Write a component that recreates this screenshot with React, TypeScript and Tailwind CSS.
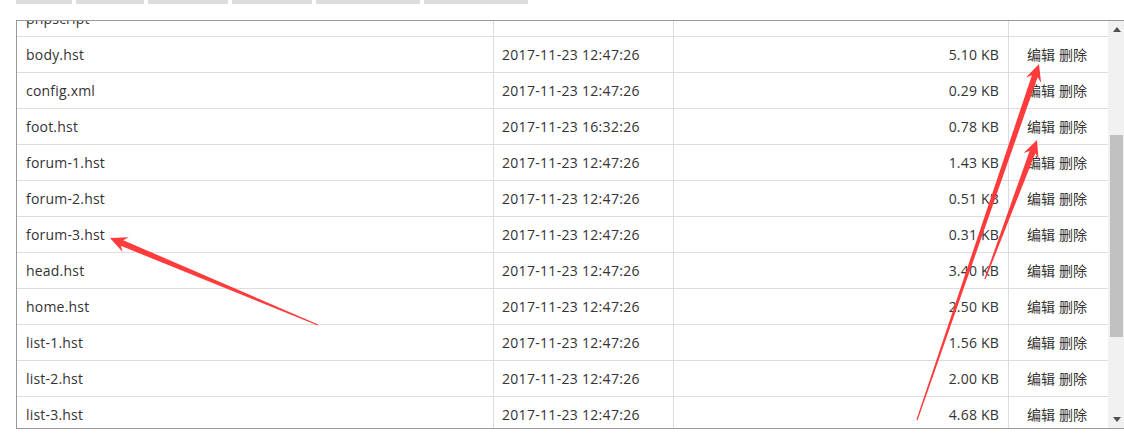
import React from 'react';

const rows = [
  { name: 'phpscript', time: '', size: '', actions: false },
  { name: 'body.hst', time: '2017-11-23 12:47:26', size: '5.10 KB', actions: true },
  { name: 'config.xml', time: '2017-11-23 12:47:26', size: '0.29 KB', actions: true },
  { name: 'foot.hst', time: '2017-11-23 16:32:26', size: '0.78 KB', actions: true },
  { name: 'forum-1.hst', time: '2017-11-23 12:47:26', size: '1.43 KB', actions: true },
  { name: 'forum-2.hst', time: '2017-11-23 12:47:26', size: '0.51 KB', actions: true },
  { name: 'forum-3.hst', time: '2017-11-23 12:47:26', size: '0.31 KB', actions: true },
  { name: 'head.hst', time: '2017-11-23 12:47:26', size: '3.40 KB', actions: true },
  { name: 'home.hst', time: '2017-11-23 12:47:26', size: '2.50 KB', actions: true },
  { name: 'list-1.hst', time: '2017-11-23 12:47:26', size: '1.56 KB', actions: true },
  { name: 'list-2.hst', time: '2017-11-23 12:47:26', size: '2.00 KB', actions: true },
  { name: 'list-3.hst', time: '2017-11-23 12:47:26', size: '4.68 KB', actions: true },
];

const tabs = ['w-[56px]', 'w-[68px]', 'w-[80px]', 'w-[80px]', 'w-[104px]', 'w-[104px]'];

// tapered annotation arrow, tail -> tip
function arrowPoints(tx: number, ty: number, px: number, py: number) {
  const len = Math.hypot(px - tx, py - ty);
  const dx = (px - tx) / len;
  const dy = (py - ty) / len;
  const nx = -dy;
  const ny = dx;
  const headLen = 17;
  const headW = 8;
  const shaftW = 3;
  const tailW = 0.6;
  const bx = px - dx * headLen;
  const by = py - dy * headLen;
  const nbx = px - dx * (headLen - 4);
  const nby = py - dy * (headLen - 4);
  const pts = [
    [tx + nx * tailW, ty + ny * tailW],
    [nbx + nx * shaftW, nby + ny * shaftW],
    [bx + nx * headW, by + ny * headW],
    [px, py],
    [bx - nx * headW, by - ny * headW],
    [nbx - nx * shaftW, nby - ny * shaftW],
    [tx - nx * tailW, ty - ny * tailW],
  ];
  return pts.map((p) => `${p[0].toFixed(1)},${p[1].toFixed(1)}`).join(' ');
}

export default function App() {
  return (
    <div
      className="relative w-[1124px] h-[439px] overflow-hidden bg-white text-[14px] text-[#333]"
      style={{ fontFamily: '"Open Sans", "Noto Sans CJK SC", sans-serif' }}
    >
      {/* cut-off buttons on top */}
      <div className="flex gap-[4px] pl-[16px]">
        {tabs.map((w, i) => (
          <div key={i} className={`${w} h-[4px] bg-[#dddddd]`} />
        ))}
      </div>

      {/* file list box */}
      <div className="mt-[16px] ml-[16px] w-[1110px] h-[409px] border border-[#999] flex">
        <div className="w-[1091px] h-full overflow-hidden">
          <div className="-mt-[20px] grid grid-cols-[477px_180px_335px_99px]">
            {rows.map((r) => (
              <React.Fragment key={r.name}>
                <div className="h-[36px] flex items-center px-[9px] tracking-[0.2px] border-b border-r border-[#dddddd]">
                  {r.name}
                </div>
                <div className="h-[36px] flex items-center px-[8px] tracking-[0.3px] border-b border-r border-[#dddddd]">
                  {r.time}
                </div>
                <div className="h-[36px] flex items-center justify-end px-[9px] tracking-[0.2px] border-b border-r border-[#dddddd]">
                  {r.size}
                </div>
                <div className="h-[36px] flex items-center justify-center gap-[4px] pr-[3px] border-b border-[#dddddd]">
                  {r.actions && (
                    <>
                      <span>编辑</span>
                      <span>删除</span>
                    </>
                  )}
                </div>
              </React.Fragment>
            ))}
          </div>
        </div>

        {/* scrollbar */}
        <div className="w-[17px] h-full bg-[#f1f1f1] flex flex-col">
          <div className="h-[17px] flex items-center justify-center">
            <svg width="8" height="5" viewBox="0 0 8 5">
              <path d="M0 5 L4 0 L8 5 Z" fill="#505050" />
            </svg>
          </div>
          <div className="flex-1 pt-[97px]">
            <div className="ml-[2px] w-[13px] h-[202px] bg-[#c1c1c1]" />
          </div>
          <div className="h-[17px] flex items-center justify-center">
            <svg width="8" height="5" viewBox="0 0 8 5">
              <path d="M0 0 L8 0 L4 5 Z" fill="#505050" />
            </svg>
          </div>
        </div>
      </div>

      {/* red annotation arrows */}
      <svg className="absolute inset-0 pointer-events-none" width="1124" height="439">
        <polygon points={arrowPoints(318, 325, 110, 238)} fill="#ff3b3b" />
        <polygon points={arrowPoints(917, 420, 1039, 64)} fill="#ff3b3b" />
        <polygon points={arrowPoints(985, 279, 1037, 140)} fill="#ff3b3b" />
      </svg>
    </div>
  );
}
